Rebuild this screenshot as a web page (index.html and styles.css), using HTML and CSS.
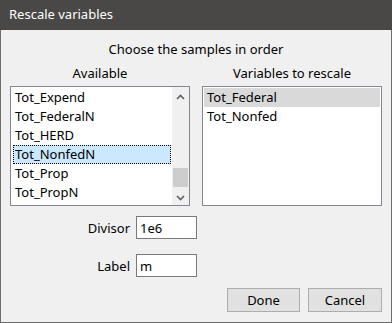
FILE: index.html
```html
<!DOCTYPE html>
<html>
<head>
<meta charset="utf-8">
<title>Rescale variables</title>
<link rel="stylesheet" href="styles.css">
</head>
<body>
    <div class="window">
        <div class="titlebar">Rescale variables</div>
        <div class="content">
            <div class="heading">Choose the samples in order</div>
            <div class="columns">
                <div class="column">
                    <div class="column-label">Available</div>
                    <div class="listbox has-scroll">
                        <ul class="items">
                            <li>Tot_Expend</li>
                            <li>Tot_FederalN</li>
                            <li>Tot_HERD</li>
                            <li class="focused">Tot_NonfedN</li>
                            <li>Tot_Prop</li>
                            <li>Tot_PropN</li>
                        </ul>
                        <div class="scrollbar">
                            <svg class="arrow" width="15" height="14" viewBox="0 0 15 14">
                                <path d="M4 9 L7.5 5.5 L11 9" fill="none" stroke="#606060" stroke-width="1.6"/>
                            </svg>
                            <div class="track">
                                <div class="thumb"></div>
                            </div>
                            <svg class="arrow" width="15" height="14" viewBox="0 0 15 14">
                                <path d="M4 5 L7.5 8.5 L11 5" fill="none" stroke="#606060" stroke-width="1.6"/>
                            </svg>
                        </div>
                    </div>
                </div>
                <div class="column">
                    <div class="column-label">Variables to rescale</div>
                    <div class="listbox">
                        <ul class="items">
                            <li class="selected">Tot_Federal</li>
                            <li>Tot_Nonfed</li>
                        </ul>
                    </div>
                </div>
            </div>
            <div class="form">
                <label class="field-label" for="divisor">Divisor</label>
                <input class="field-input" id="divisor" type="text" value="1e6">
                <label class="field-label" for="label">Label</label>
                <input class="field-input" id="label" type="text" value="m">
            </div>
            <div class="buttons">
                <button class="button done">Done</button>
                <button class="button cancel">Cancel</button>
            </div>
        </div>
    </div>
</body>
</html>
```

FILE: styles.css
```css
body, html {
    margin: 0;
}

body {
    font-family: "Noto Sans", "Open Sans", sans-serif;
    font-size: 13px;
    color: #000;
}

.window {
    width: 392px;
    height: 323px;
    box-sizing: border-box;
    background-color: #f0f0f0;
    border: 1px solid #6e6e6e;
    border-top: none;
    display: flex;
    flex-direction: column;
}

.titlebar {
    height: 30px;
    line-height: 29px;
    margin: 0 -1px;
    padding-left: 9px;
    background-color: #4a4846;
    color: #fff;
    flex: none;
}

.content {
    flex: 1;
    display: flex;
    flex-direction: column;
}

.heading {
    text-align: center;
    margin-top: 10px;
    line-height: 18px;
    height: 18px;
}

.columns {
    display: grid;
    grid-template-columns: 180px 180px;
    column-gap: 12px;
    padding-left: 9px;
    margin-top: 6px;
}

.column-label {
    text-align: center;
    line-height: 18px;
    height: 18px;
    margin-bottom: 4px;
}

.listbox {
    height: 120px;
    box-sizing: border-box;
    border: 1px solid #828790;
    background-color: #fff;
    display: flex;
}

.items {
    list-style: none;
    margin: 0;
    padding: 1px 0 0 0;
    flex: 1;
}

.items li {
    height: 19px;
    line-height: 19px;
    box-sizing: border-box;
    margin: 0 1px;
    padding-left: 3px;
    white-space: nowrap;
}

.has-scroll .items li {
    margin-left: 2px;
    padding-left: 2px;
}

.items li.focused {
    background-color: #cce8ff;
    outline: 1px dotted #000;
    outline-offset: -1px;
}

.items li.selected {
    background-color: #d9d9d9;
}

.scrollbar {
    width: 17px;
    background-color: #f0f0f0;
    display: flex;
    flex-direction: column;
    align-items: center;
}

.arrow {
    flex: none;
    margin-top: 3px;
}

.track {
    flex: 1;
    width: 15px;
    position: relative;
}

.thumb {
    position: absolute;
    left: 0;
    right: 0;
    bottom: 1px;
    height: 19px;
    background-color: #cdcdcd;
}

.form {
    display: grid;
    grid-template-columns: 121px 61px;
    column-gap: 6px;
    row-gap: 15px;
    margin: 10px 0 0 8px;
    align-items: center;
}

.field-label {
    text-align: right;
}

.field-input {
    width: 61px;
    height: 23px;
    box-sizing: border-box;
    border: 1px solid #7a7a7a;
    margin: 0;
    padding: 0 3px;
    font-family: inherit;
    font-size: 13px;
    background-color: #fff;
    outline: none;
}

.buttons {
    display: flex;
    justify-content: flex-end;
    gap: 8px;
    padding-right: 9px;
    margin-top: 11px;
}

.button {
    height: 24px;
    box-sizing: border-box;
    border: 1px solid #adadad;
    background-color: #e1e1e1;
    font-family: inherit;
    font-size: 13px;
    color: #000;
    padding: 0;
}

.done {
    width: 73px;
}

.cancel {
    width: 74px;
}
```
